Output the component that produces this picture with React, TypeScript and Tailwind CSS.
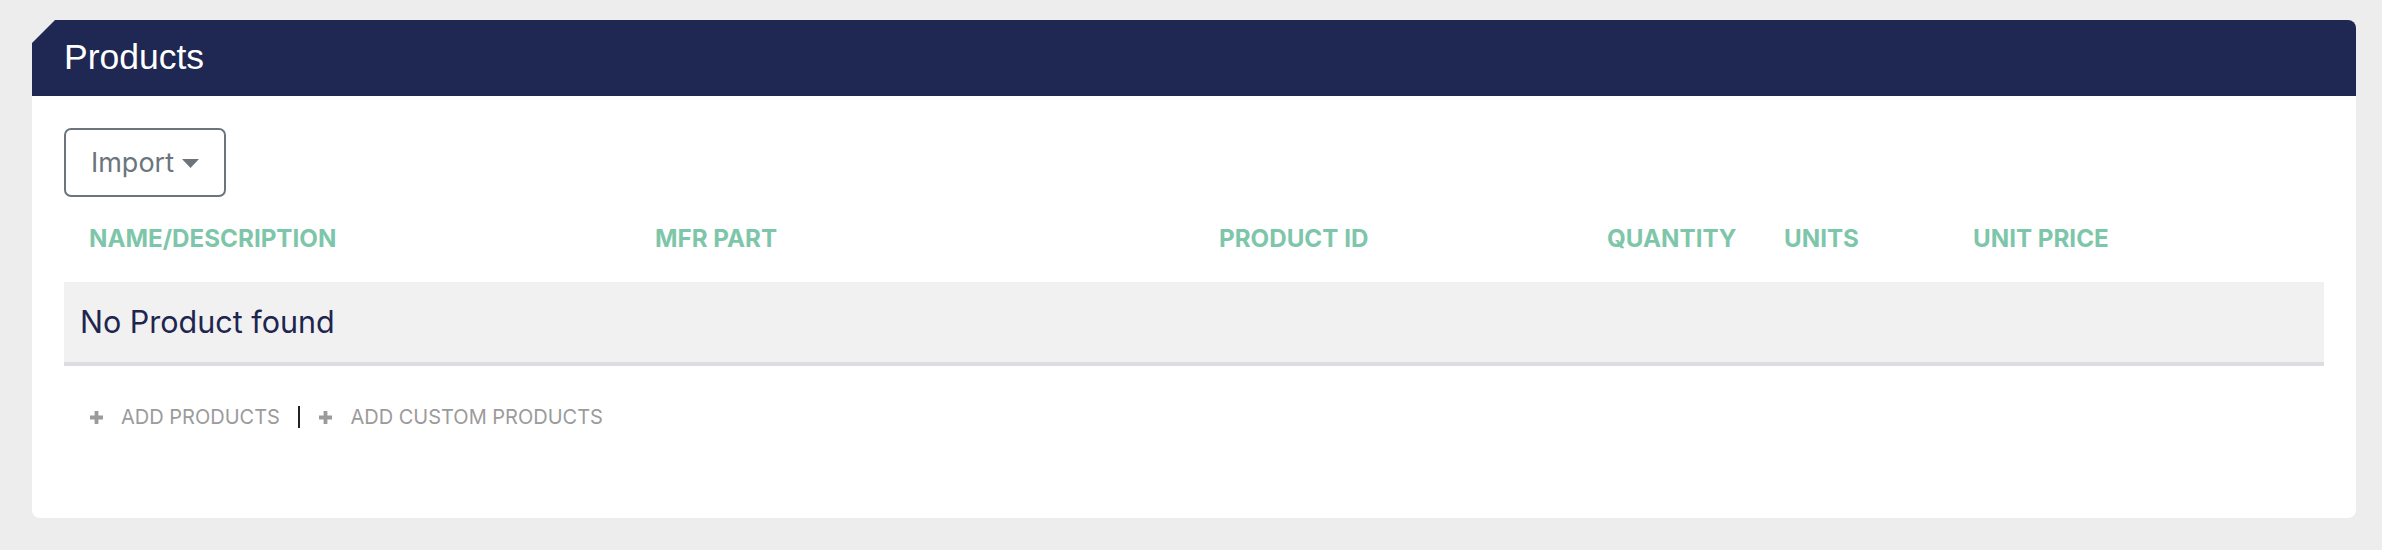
const columns = [
  "NAME/DESCRIPTION",
  "MFR PART",
  "PRODUCT ID",
  "QUANTITY",
  "UNITS",
  "UNIT PRICE",
];

function PlusIcon() {
  return (
    <svg width="15" height="15" viewBox="0 0 15 15" className="shrink-0">
      <path d="M7.5 1v13M1 7.5h13" stroke="#9b9b9b" strokeWidth="3.8" />
    </svg>
  );
}

export default function App() {
  return (
    <div className="w-[2382px] h-[550px] bg-[#ededed] pt-[20px] pl-[32px] font-['Inter',sans-serif]">
      <div className="w-[2324px] bg-white rounded-[8px] [clip-path:polygon(23px_0,100%_0,100%_100%,0_100%,0_23px)] overflow-hidden">
        {/* header */}
        <div className="h-[76px] bg-[#1f2753] flex items-center pl-[32px]">
          <div className="text-white text-[35.5px] font-['Liberation_Sans',Arial,sans-serif] leading-none">
            Products
          </div>
        </div>
        {/* body */}
        <div className="px-[32px] pt-[32px] pb-[81px]">
          <button className="h-[69px] w-[162px] border-2 border-[#6c757d] rounded-[7px] flex items-center justify-center gap-[8px] pt-[2px] text-[#6c757d] text-[27px]">
            <span>Import</span>
            <svg width="17" height="9" viewBox="0 0 17 9">
              <path d="M0 0h17L8.5 9z" fill="#6c757d" />
            </svg>
          </button>
          {/* table head */}
          <div className="h-[85px] grid grid-cols-[566px_564px_388px_177px_189px_1fr] items-center">
            {columns.map((c) => (
              <div
                key={c}
                className="pl-[25px] text-[24.2px] font-bold text-[#7ec6aa] leading-none whitespace-nowrap"
              >
                {c}
              </div>
            ))}
          </div>
          {/* empty row */}
          <div className="h-[84px] bg-[#f1f1f1] border-b-4 border-[#dcdde2] flex items-center pl-[16px]">
            <span className="text-[30.5px] text-[#1e2650]">No Product found</span>
          </div>
          {/* actions */}
          <div className="mt-[31px] h-[40px] flex items-center pl-[25px] text-[20px] text-[#9b9b9b]">
            <div className="flex items-center gap-[17px]">
              <PlusIcon />
              <span>ADD PRODUCTS</span>
            </div>
            <div className="w-[2.5px] h-[22px] bg-[#222] mx-[18px]" />
            <div className="flex items-center gap-[17px]">
              <PlusIcon />
              <span>ADD CUSTOM PRODUCTS</span>
            </div>
          </div>
        </div>
      </div>
    </div>
  );
}
